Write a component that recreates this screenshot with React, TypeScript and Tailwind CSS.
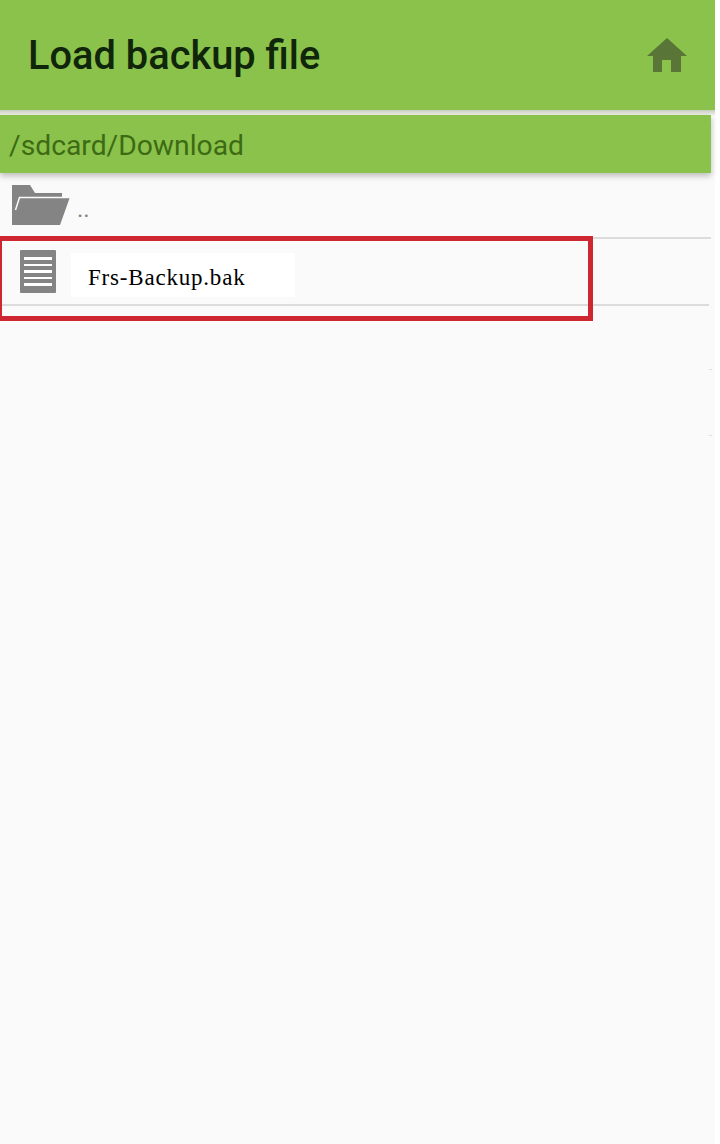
import React from 'react';

const HomeIcon: React.FC = () => (
  <svg viewBox="0 0 40 34" className="w-[40px] h-[34px]" fill="#5a7538">
    <path d="M20 0 L40 18 H34 V34 H24 V22 H15 V34 H6 V18 H0 Z" />
  </svg>
);

const FolderIcon: React.FC = () => (
  <svg viewBox="0 0 58 40" className="w-[58px] h-[40px]">
    <path d="M0 0 H18 L23 8 H50 V12 H58 L48 40 H0 Z" fill="#848484" />
    <path d="M3.5 25 L7.5 12.5 H58" fill="none" stroke="#fafafa" strokeWidth="1.5" />
  </svg>
);

const FileIcon: React.FC = () => (
  <div className="w-[36px] h-[43px] bg-[#848484] rounded-[1px] flex flex-col justify-center gap-[4px] px-[4px]">
    <div className="h-[2.5px] bg-white" />
    <div className="h-[2.5px] bg-white" />
    <div className="h-[2.5px] bg-white" />
    <div className="h-[2.5px] bg-white" />
    <div className="h-[2.5px] bg-white" />
  </div>
);

export default function App() {
  return (
    <div className="w-[720px] h-[1144px] bg-white overflow-hidden">
      <div className="relative w-[715px] h-[1144px] bg-[#fafafa] font-['Roboto',sans-serif]">
        <header className="h-[110px] bg-[#8ac24b] flex items-center justify-between pl-[28px] pr-[28px]">
          <h1 className="pt-[2px] text-[39.8px] font-medium text-[#10260a] leading-none">Load backup file</h1>
          <HomeIcon />
        </header>
        <div className="h-[5px] bg-gradient-to-b from-[#c8cdc0] to-[#f0f0ec]" />
        <div className="w-[711px] h-[58px] bg-[#8ac24b] flex items-center pl-[9px] pt-[4px] shadow-[0_3px_6px_rgba(0,0,0,0.25)]">
          <span className="text-[28.25px] text-[#3d6b14] leading-none">/sdcard/Download</span>
        </div>

        <div className="w-[711px] h-[66px] flex items-center pl-[12px] border-b-2 border-[#dcdcdc]">
          <FolderIcon />
          <span className="ml-[7px] mt-[8px] text-[24px] text-[#848484] leading-none">..</span>
        </div>

        <div className="w-[709px] h-[67px] flex items-center pl-[20px] border-b-2 border-[#dcdcdc]">
          <FileIcon />
          <div className="ml-[15px] mt-[6px] w-[224px] h-[44px] bg-white flex items-center pl-[17px] pt-[5px]">
            <span className="font-['Liberation_Serif',serif] text-[23px] tracking-[0.8px] text-black leading-none">Frs-Backup.bak</span>
          </div>
        </div>

        {/* red highlight drawn over the row */}
        <div className="absolute left-[-3px] top-[236px] w-[596px] h-[85px] border-[5px] border-[#cf2732]" />

        {/* faint specks left at the right edge */}
        <div className="absolute left-[709px] top-[369px] w-[3px] h-[1px] bg-[#e0e0e0]" />
        <div className="absolute left-[709px] top-[435px] w-[3px] h-[1px] bg-[#e0e0e0]" />
      </div>
    </div>
  );
}
